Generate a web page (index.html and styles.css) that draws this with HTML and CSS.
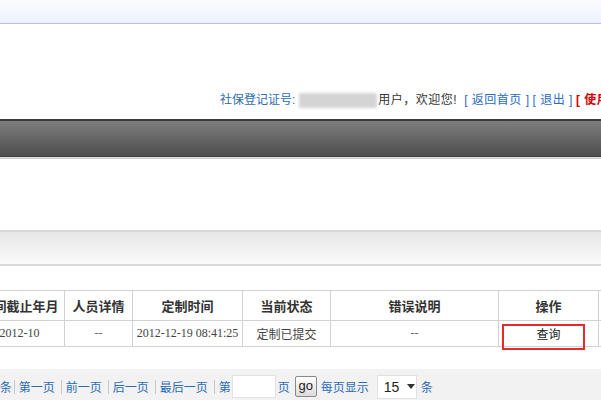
FILE: index.html
```html
<!DOCTYPE html>
<html lang="zh-CN">
<head>
    <meta charset="UTF-8">
    <meta name="viewport" content="width=device-width, initial-scale=1.0">
    <title>定制查询</title>
    <link rel="stylesheet" href="styles.css">
</head>
<body>

<div class="topbar"></div>

<div class="userbar">
    <span class="label">社保登记证号:</span><span class="masked"></span><span class="welcome">用户，欢迎您!</span><a class="link" href="#">[ 返回首页 ]</a><a class="link" href="#">[ 退出 ]</a><a class="link red" href="#">[ 使用说明 ]</a>
</div>

<div class="navbar"></div>

<div class="toolbar"></div>

<table class="grid">
    <colgroup>
        <col style="width:90px">
        <col style="width:68px">
        <col style="width:110px">
        <col style="width:88px">
        <col style="width:168px">
        <col style="width:100px">
        <col style="width:60px">
    </colgroup>
    <thead>
        <tr>
            <th>期间截止年月</th>
            <th>人员详情</th>
            <th>定制时间</th>
            <th>当前状态</th>
            <th>错误说明</th>
            <th>操作</th>
            <th></th>
        </tr>
    </thead>
    <tbody>
        <tr>
            <td>2012-10</td>
            <td class="dash">--</td>
            <td>2012-12-19 08:41:25</td>
            <td>定制已提交</td>
            <td class="dash">--</td>
            <td class="action"><a href="#">查询</a><span class="mark"></span></td>
            <td></td>
        </tr>
    </tbody>
</table>

<div class="pager">
    <span class="total">共1条</span>
    <span class="sep first"></span>
    <a href="#">第一页</a>
    <span class="sep"></span>
    <a href="#">前一页</a>
    <span class="sep"></span>
    <a href="#">后一页</a>
    <span class="sep"></span>
    <a href="#">最后一页</a>
    <span class="sep"></span>
    <span>第</span>
    <input type="text" class="page-input">
    <span class="page-word">页</span>
    <button type="button" class="go">go</button>
    <span class="per-page">每页显示</span>
    <span class="select">15<span class="caret"></span></span>
    <span class="unit">条</span>
</div>

</body>
</html>
```

FILE: styles.css
```css
html, body {
    overflow: hidden;
}

body {
    margin: 0;
    font-family: "Liberation Sans", "Noto Sans CJK SC", sans-serif;
    font-size: 12px;
    color: #333;
    background: #fff;
}

a {
    text-decoration: none;
}

.topbar {
    height: 23px;
    background: linear-gradient(#fbfcff, #edf2fd);
    border-bottom: 1px solid #b7bfee;
}

.userbar {
    height: 95px;
    box-sizing: border-box;
    padding: 67px 0 0 220px;
    line-height: 18px;
    white-space: nowrap;
    display: flex;
    align-items: flex-start;
}

.userbar > * {
    flex-shrink: 0;
}

.userbar .label {
    color: #2d6db3;
}

.userbar .masked {
    display: inline-block;
    width: 78px;
    height: 15px;
    margin: 2px 0 0 4px;
    background: #d4d4d4;
    filter: blur(1.5px);
}

.userbar .welcome {
    color: #333;
    margin-left: 1px;
    letter-spacing: 0.5px;
}

.userbar .link {
    color: #2a6cc4;
    letter-spacing: 0.5px;
}

.userbar .link:first-of-type {
    margin-left: 7px;
}

.userbar .link + .link {
    margin-left: 3px;
}

.userbar .red {
    color: #d40000;
    font-weight: bold;
}

.navbar {
    height: 35px;
    border-top: 2px solid #3b3b3b;
    border-bottom: 1px solid #3e3e3e;
    background: linear-gradient(#7e7e7e, #4d4d4d);
    box-shadow: 0 1px 0 #e4e4e4, 0 2px 0 #c9c9c9;
}

.toolbar {
    margin-top: 73px;
    height: 32px;
    border-top: 2px solid #d8d8d8;
    border-bottom: 2px solid #dadada;
    background: linear-gradient(#e6e6e6, #fbfbfb);
}

.grid {
    margin: 24px 0 0 -26px;
    border-collapse: collapse;
    table-layout: fixed;
    width: 684px;
}

.grid th, .grid td {
    border: 1px solid #d2d2d2;
    text-align: center;
    padding: 0;
    white-space: nowrap;
    overflow: hidden;
}

.grid th {
    height: 29px;
    font-size: 13px;
    font-weight: bold;
    color: #333;
}

.grid td {
    height: 25px;
    font-family: "Liberation Serif", "Noto Sans CJK SC", serif;
    font-size: 12px;
    color: #444;
}

.grid td.dash {
    color: #666;
}

.grid td.action {
    position: relative;
    overflow: visible;
}

.grid td.action a {
    color: #222;
    font-family: "Liberation Sans", "Noto Sans CJK SC", sans-serif;
}

.mark {
    position: absolute;
    left: 3px;
    top: 3px;
    width: 83px;
    height: 26px;
    box-sizing: border-box;
    border: 2px solid #e62a2c;
}

.pager {
    margin-top: 22px;
    height: 33px;
    padding-top: 2px;
    box-sizing: border-box;
    background: #f2f2f2;
    display: flex;
    align-items: center;
    white-space: nowrap;
    color: #2a6cb5;
}

.pager > * {
    flex-shrink: 0;
}

.pager a {
    color: #2a6cb5;
}

.pager .total {
    margin-left: -19px;
}

.pager .sep {
    display: inline-block;
    width: 0;
    height: 14px;
    border-left: 1px solid #c8c8c8;
    margin: 0 4px 0 6px;
}

.pager .sep.first {
    margin: 0 4px 0 2px;
}

.page-input {
    width: 44px;
    height: 23px;
    box-sizing: border-box;
    margin: 0 0 0 1px;
    border: 1px solid #e2e2e2;
    background: #fff;
    padding: 0;
}

.page-word {
    margin-left: 2px;
}

.go {
    margin-left: 5px;
    width: 22px;
    height: 21px;
    padding: 0 0 2px;
    border: 1px solid #8a8a8a;
    border-radius: 2px;
    background: linear-gradient(#fdfdfd, #dcdcdc);
    font-family: "Liberation Sans", sans-serif;
    font-size: 13px;
    color: #222;
}

.per-page {
    margin-left: 4px;
}

.select {
    margin-left: 8px;
    width: 40px;
    height: 24px;
    box-sizing: border-box;
    border: 1px solid #e0e0e0;
    background: #fff;
    display: flex;
    align-items: center;
    padding-left: 6px;
    font-family: "Liberation Sans", sans-serif;
    font-size: 14px;
    color: #222;
}

.caret {
    margin-left: 8px;
    width: 0;
    height: 0;
    border-left: 4px solid transparent;
    border-right: 4px solid transparent;
    border-top: 5px solid #333;
}

.unit {
    margin-left: 4px;
}
```
